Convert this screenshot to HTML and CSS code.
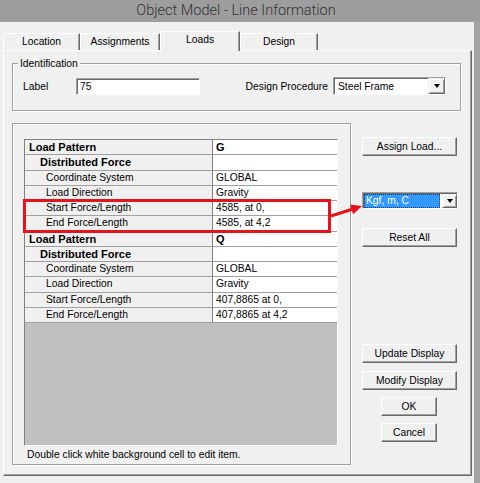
FILE: index.html
```html
<!DOCTYPE html>
<html>
<head>
<meta charset="utf-8">
<title>Object Model - Line Information</title>
<link rel="stylesheet" href="styles.css">
</head>
<body>
<div class="window">
  <div class="titlebar">Object Model - Line Information</div>
  <div class="frame">
    <div class="client">
      <div class="tabs">
        <div class="tab t1">Location</div>
        <div class="tab t2">Assignments</div>
        <div class="tab t3 sel">Loads</div>
        <div class="tab t4">Design</div>
      </div>
      <div class="panel">
        <div class="group ident">
          <span class="legend">Identification</span>
          <div class="row">
            <span class="lbl">Label</span>
            <div class="input">75</div>
            <span class="dp">Design Procedure</span>
            <div class="select">
              <span class="val">Steel Frame</span>
              <span class="dropbtn"><i class="tri"></i></span>
            </div>
          </div>
        </div>
        <div class="main">
          <div class="group gridframe">
            <div class="grid">
              <div class="gr h"><div class="k">Load Pattern</div><div class="v b">G</div></div>
              <div class="gr h2"><div class="k">Distributed Force</div><div class="v"></div></div>
              <div class="gr s"><div class="k">Coordinate System</div><div class="v">GLOBAL</div></div>
              <div class="gr s"><div class="k">Load Direction</div><div class="v">Gravity</div></div>
              <div class="gr s"><div class="k">Start Force/Length</div><div class="v">4585, at 0,</div></div>
              <div class="gr s"><div class="k">End Force/Length</div><div class="v">4585, at 4,2</div></div>
              <div class="gr h"><div class="k">Load Pattern</div><div class="v b">Q</div></div>
              <div class="gr h2"><div class="k">Distributed Force</div><div class="v"></div></div>
              <div class="gr s"><div class="k">Coordinate System</div><div class="v">GLOBAL</div></div>
              <div class="gr s"><div class="k">Load Direction</div><div class="v">Gravity</div></div>
              <div class="gr s"><div class="k">Start Force/Length</div><div class="v">407,8865 at 0,</div></div>
              <div class="gr s"><div class="k">End Force/Length</div><div class="v">407,8865 at 4,2</div></div>
            </div>
            <div class="hint">Double click white background cell to edit item.</div>
          </div>
          <div class="buttons">
            <div class="btn b-assign">Assign Load...</div>
            <div class="combo">
              <span class="hl">Kgf, m, C</span>
              <span class="dropbtn small"><i class="tri"></i></span>
            </div>
            <div class="btn b-reset">Reset All</div>
            <div class="btn b-update">Update Display</div>
            <div class="btn b-modify">Modify Display</div>
            <div class="btn b-ok">OK</div>
            <div class="btn b-cancel">Cancel</div>
          </div>
        </div>
      </div>
    </div>
    <div class="edge"></div>
  </div>
  <svg class="annot" width="480" height="483" viewBox="0 0 480 483">
    <rect x="24.5" y="200.5" width="305" height="31" fill="none" stroke="#e3141c" stroke-width="3"/>
    <line x1="331" y1="216" x2="353" y2="209" stroke="#e3141c" stroke-width="3"/>
    <polygon points="362,206 350,204.4 353.2,214.2" fill="#e3141c"/>
  </svg>
</div>
</body>
</html>
```

FILE: styles.css
```css
* { box-sizing: border-box; }

body {
  margin: 0;
  background: #f0f0f0;
  font-family: "Liberation Sans", Arial, sans-serif;
  font-size: 10.3px;
  color: #000;
}

.window {
  position: relative;
  width: 480px;
  height: 483px;
  overflow: hidden;
  display: flex;
  flex-direction: column;
}

.titlebar {
  height: 22px;
  flex: none;
  background: #9d9d9d;
  color: #333;
  font-family: Roboto, "Noto Sans", sans-serif;
  font-weight: 300;
  font-size: 14.5px;
  line-height: 22px;
  text-align: center;
  padding-right: 8px;
}

.frame {
  flex: 1;
  display: flex;
}

.client {
  width: 474px;
  background: #f0f0f0;
  padding-left: 3px;
}

.edge {
  flex: 1;
  background: #a2a2a2;
}

/* Tabs */
.tabs {
  height: 28px;
  display: flex;
  align-items: flex-end;
  position: relative;
  z-index: 2;
}

.tab {
  height: 17px;
  background: #f0f0f0;
  border-top: 1px solid #fff;
  border-left: 1px solid #fff;
  border-right: 1px solid #696969;
  box-shadow: inset -1px 0 0 #a0a0a0;
  text-align: center;
  line-height: 15px;
}

.tab.sel {
  height: 20px;
  margin-bottom: -1px;
  line-height: 16px;
}

.t1 { width: 77px; }
.t2 { width: 80px; }
.t3 { width: 80px; }
.t4 { width: 78px; }

/* Panel */
.panel {
  width: 469px;
  height: 426px;
  border: 1px solid;
  border-color: #fff #696969 #696969 #fff;
  box-shadow: inset -1px -1px 0 #a0a0a0;
  padding: 12px 0 0 8px;
}

.group {
  position: relative;
  border: 1px solid #a0a0a0;
  box-shadow: inset 1px 1px 0 #fff, 1px 1px 0 #fff;
}

.ident {
  width: 449px;
  height: 48px;
  padding: 13px 14px 0 10px;
}

.legend {
  position: absolute;
  top: -7px;
  left: 5px;
  padding: 0 2px;
  background: #f0f0f0;
  line-height: 13px;
}

.row {
  display: flex;
  align-items: center;
  height: 18px;
}

.lbl { width: 53px; }

.input {
  width: 124px;
  height: 17px;
  background: #fff;
  border: 1px solid;
  border-color: #a0a0a0 #fff #fff #a0a0a0;
  box-shadow: inset 1px 1px 0 #696969;
  padding-left: 3px;
  line-height: 15px;
}

.dp {
  margin-left: auto;
  margin-right: 5px;
}

.select {
  width: 113px;
  height: 18px;
  display: flex;
  background: #fff;
  border: 1px solid;
  border-color: #a0a0a0 #fff #fff #a0a0a0;
  box-shadow: inset 1px 1px 0 #696969;
}

.select .val {
  flex: 1;
  padding-left: 4px;
  padding-top: 1px;
  line-height: 15px;
}

.dropbtn {
  width: 17px;
  display: flex;
  align-items: center;
  justify-content: center;
  background: #f0f0f0;
  border: 1px solid;
  border-color: #f0f0f0 #696969 #696969 #f0f0f0;
  box-shadow: inset 1px 1px 0 #fff, inset -1px -1px 0 #a0a0a0;
}

.dropbtn.small { width: 15px; }

.tri {
  display: block;
  width: 0;
  height: 0;
  border-left: 3.5px solid transparent;
  border-right: 3.5px solid transparent;
  border-top: 4px solid #000;
}

/* Main area */
.main {
  display: flex;
  margin-top: 12px;
}

.gridframe {
  width: 339px;
  height: 342px;
  padding: 15px 0 0 11px;
}

.grid {
  width: 314px;
  height: 307px;
  background: #c0c0c0;
  border: 1px solid;
  border-color: #808080 #fff #fff #808080;
}

.gr {
  display: grid;
  grid-template-columns: 188px 1fr;
  height: 15.25px;
}

.gr > div {
  border-bottom: 1px solid #a0a0a0;
  line-height: 14px;
  white-space: nowrap;
  overflow: hidden;
}

.gr .k {
  background: #f0f0f0;
  border-right: 1px solid #808080;
}

.gr .v {
  background: #fff;
  padding-left: 3px;
}

.gr .v.b {
  font-weight: bold;
  font-size: 11px;
}

.h .k {
  font-weight: bold;
  font-size: 11px;
  padding-left: 4px;
}

.h2 .k {
  font-weight: bold;
  font-size: 11px;
  padding-left: 15px;
}

.s .k { padding-left: 21px; }

.hint {
  margin-top: 2px;
  padding-left: 3px;
  line-height: 14px;
}

/* Right buttons */
.buttons {
  margin-left: 11px;
  width: 96px;
  display: flex;
  flex-direction: column;
}

.btn {
  width: 95px;
  height: 19px;
  background: #f0f0f0;
  border: 1px solid;
  border-color: #fff #696969 #696969 #fff;
  box-shadow: inset -1px -1px 0 #a0a0a0;
  text-align: center;
  line-height: 17px;
}

.b-assign { margin-top: 14px; }
.b-reset { margin-top: 19px; }
.b-update { margin-top: 97px; }
.b-modify { margin-top: 8px; }
.b-ok { margin-top: 7px; width: 56px; margin-left: 19px; }
.b-cancel { margin-top: 7px; width: 56px; margin-left: 19px; }

.combo {
  margin-top: 36px;
  width: 96px;
  height: 17px;
  display: flex;
  background: #fff;
  border: 1px solid;
  border-color: #a0a0a0 #fff #fff #a0a0a0;
  box-shadow: inset 1px 1px 0 #696969;
  padding: 1px 0 0 1px;
}

.combo .hl {
  flex: 1;
  margin-right: 2px;
  background: #3399ff;
  color: #fff;
  outline: 1px dotted #1a3d66;
  outline-offset: -1px;
  padding-left: 2px;
  line-height: 14px;
}

/* Annotation overlay */
.annot {
  position: absolute;
  left: 0;
  top: 0;
  pointer-events: none;
}
```
